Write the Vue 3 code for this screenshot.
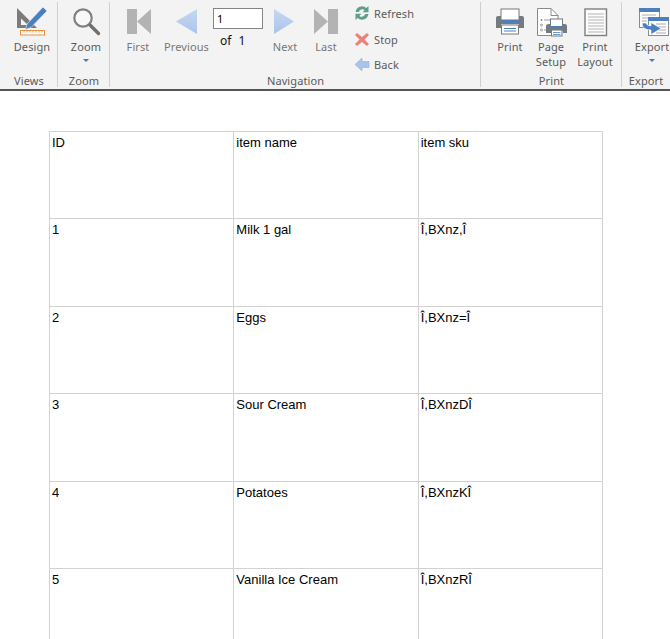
<script setup>
const rows = [
  ['ID', 'item name', 'item sku'],
  ['1', 'Milk 1 gal', 'Î,BXnz,Î'],
  ['2', 'Eggs', 'Î,BXnz=Î'],
  ['3', 'Sour Cream', 'Î,BXnzDÎ'],
  ['4', 'Potatoes', 'Î,BXnzKÎ'],
  ['5', 'Vanilla Ice Cream', 'Î,BXnzRÎ']
]
</script>

<template>
  <div class="page">
    <header class="ribbon">
      <section class="group views">
        <div class="body">
          <button class="btn w50">
            <svg viewBox="7 0 50 39" width="50" height="39">
              <path d="M17 8 L17 28 L37 28 Z M21 18.5 L21 25 L28 25 Z" fill="#7b7b7b" fill-rule="evenodd"/>
              <path d="M43 7 L47 11 L31 27.5 L25.5 29.5 L27 24 Z" fill="#4a80c0" stroke="#f3f3f3" stroke-width=".6"/>
              <rect x="20.5" y="30.5" width="24" height="4.5" fill="#fff" stroke="#e8913a"/>
              <path d="M24 31v1.5M27 31v1.5M30 31v1.5M33 31v1.5M36 31v1.5M39 31v1.5M42 31v1.5" stroke="#e8913a" stroke-width=".8"/>
            </svg>
            <span>Design</span>
          </button>
        </div>
        <div class="glabel">Views</div>
      </section>

      <section class="group zoom">
        <div class="body">
          <button class="btn w42">
            <svg viewBox="65 0 42 39" width="42" height="39">
              <circle cx="83" cy="18" r="8.7" fill="#f8f8f8" stroke="#808080" stroke-width="2.2"/>
              <path d="M90 25 L98.5 33.5" stroke="#707070" stroke-width="3.4" stroke-linecap="round"/>
            </svg>
            <span>Zoom</span>
            <i class="caret"></i>
          </button>
        </div>
        <div class="glabel">Zoom</div>
      </section>

      <section class="group nav">
        <div class="body">
          <button class="btn w44 dim">
            <svg viewBox="116 0 44 39" width="44" height="39">
              <rect x="127" y="9" width="10" height="25" fill="#b3b3b3"/>
              <path d="M151 9 L137 21.5 L151 34 Z" fill="#b3b3b3"/>
            </svg>
            <span>First</span>
          </button>
          <button class="btn w53 dim">
            <svg viewBox="160 0 53 39" width="53" height="39">
              <path d="M197 9 L176 21.5 L197 34 Z" fill="url(#navL)"/>
              <defs>
                <linearGradient id="navL" x1="0" y1="0" x2="0" y2="1">
                  <stop offset="0" stop-color="#c6d8f2"/><stop offset="1" stop-color="#a9c4ea"/>
                </linearGradient>
              </defs>
            </svg>
            <span>Previous</span>
          </button>
          <div class="pager">
            <input class="pageinput" value="1" />
            <div class="of"><span>of</span><span>1</span></div>
          </div>
          <button class="btn w44 dim">
            <svg viewBox="263 0 44 39" width="44" height="39">
              <path d="M274 9 L294 21.5 L274 34 Z" fill="url(#navL)"/>
            </svg>
            <span>Next</span>
          </button>
          <button class="btn w38 dim">
            <svg viewBox="307 0 38 39" width="38" height="39">
              <path d="M314 9 L328 21.5 L314 34 Z" fill="#b3b3b3"/>
              <rect x="328" y="9" width="10" height="25" fill="#b3b3b3"/>
            </svg>
            <span>Last</span>
          </button>
          <div class="smalls">
            <div class="small refresh">
              <svg viewBox="0 0 16 16" width="16" height="16">
                <path d="M1.6 7 A6.5 6.5 0 0 1 12.4 3 L14.5 1 V7.2 H8.6 L10.6 5.1 A3.6 3.6 0 0 0 4.8 7 Z" fill="#5f9f88"/>
                <path d="M14.4 9 A6.5 6.5 0 0 1 3.6 13 L1.5 15 V8.8 H7.4 L5.4 10.9 A3.6 3.6 0 0 0 11.2 9 Z" fill="#5f9f88"/>
              </svg>
              <span>Refresh</span>
            </div>
            <div class="small stop">
              <svg viewBox="0 0 16 16" width="16" height="16">
                <path d="M3 2 L8 6 L13 2 L15 4 L10.5 8.5 L15 13 L13 15 L8 11 L3 15 L1 13 L5.5 8.5 L1 4 Z" fill="#ea8478"/>
              </svg>
              <span>Stop</span>
            </div>
            <div class="small back">
              <svg viewBox="0 0 16 16" width="16" height="16">
                <path d="M8 2 L1 8.5 L8 15 V11.5 H15 V5.5 H8 Z" fill="#a9c4ea" stroke="#8fb0de" stroke-width=".6"/>
              </svg>
              <span>Back</span>
            </div>
          </div>
        </div>
        <div class="glabel">Navigation</div>
      </section>

      <section class="group print">
        <div class="body">
          <button class="btn w40">
            <svg viewBox="490 0 40 39" width="40" height="39">
              <rect x="501" y="9" width="18" height="11" fill="#fff" stroke="#7b7b7b"/>
              <path d="M498 16 H501 V21 H519 V16 H522 Q524 16 524 18 V28 H519 V24 H501 V28 H496 V18 Q496 16 498 16 Z" fill="#747b80"/>
              <rect x="501" y="20" width="18" height="2.5" fill="#4a80c0"/>
              <rect x="501.5" y="25" width="17" height="9" fill="#fff" stroke="#7b7b7b"/>
              <path d="M504 28.5h12M504 31h12" stroke="#4a80c0"/>
            </svg>
            <span>Print</span>
          </button>
          <button class="btn w42">
            <svg viewBox="530 0 42 39" width="42" height="39">
              <path d="M537.5 8.5 H551 L558 15.5 V35.5 H537.5 Z" fill="#fff" stroke="#8a8a8a"/>
              <path d="M551 8.5 V15.5 H558" fill="none" stroke="#8a8a8a"/>
              <circle cx="541.5" cy="20" r="1" fill="#888"/>
              <circle cx="541.5" cy="25" r="1" fill="none" stroke="#888" stroke-width=".8"/>
              <circle cx="541.5" cy="30" r="1" fill="none" stroke="#888" stroke-width=".8"/>
              <path d="M544 20h6M544 30h2" stroke="#999"/>
              <rect x="550.5" y="19" width="12" height="8" fill="#fff" stroke="#747b80"/>
              <path d="M549 24 H550.5 V27.5 H562.5 V24 H565 Q567 24 567 26 V33 H563 V31 H551 V33 H546 V26 Q546 24 549 24 Z" fill="#747b80"/>
              <rect x="550.5" y="26" width="12" height="2" fill="#4a80c0"/>
              <rect x="551.5" y="30" width="10.5" height="6" fill="#fff" stroke="#747b80"/>
              <path d="M553 32.5h7.5M553 34.5h7.5" stroke="#4a80c0" stroke-width=".8"/>
            </svg>
            <span>Page<br />Setup</span>
          </button>
          <button class="btn w46">
            <svg viewBox="572 0 46 39" width="46" height="39">
              <rect x="585" y="9" width="21.5" height="26.5" fill="#fcfcfc" stroke="#7f7f7f" stroke-width="1.4"/>
              <path d="M588 14h16M588 17h16M588 20h16M588 23h16M588 26h16M588 29h16M588 32h16" stroke="#b5b5b5"/>
            </svg>
            <span>Print<br />Layout</span>
          </button>
        </div>
        <div class="glabel">Print</div>
      </section>

      <section class="group export">
        <div class="body">
          <button class="btn w46">
            <svg viewBox="629 0 46 39" width="46" height="39">
              <rect x="639.5" y="8.5" width="20" height="19" fill="#fff" stroke="#8a8a8a"/>
              <rect x="639" y="8" width="21" height="4" fill="#4a80c0"/>
              <path d="M642 15h14M642 18h14M642 21h5" stroke="#aaa"/>
              <rect x="648.5" y="17.5" width="20" height="18" fill="#fff" stroke="#8a8a8a"/>
              <rect x="648" y="17" width="21" height="4" fill="#4a80c0"/>
              <path d="M656 24h10M657 27h9M657 30h9M656 33h10" stroke="#aaa"/>
              <path d="M642 23 Q642 30 651 30 V34.5 L661 28.5 L651 22.5 V26 Q647 26 646 23 Z" fill="#4a80c0" stroke="#fff" stroke-width=".6"/>
            </svg>
            <span>Export</span>
            <i class="caret"></i>
          </button>
        </div>
        <div class="glabel">Export</div>
      </section>
    </header>

    <main class="content">
      <table class="grid">
        <tbody>
          <tr v-for="(row, r) in rows" :key="r">
            <td v-for="(cell, c) in row" :key="c">{{ cell }}</td>
          </tr>
        </tbody>
      </table>
    </main>
  </div>
</template>

<style>
html, body { margin: 0; background: #fff; overflow: hidden; }
</style>

<style scoped>
.page { width: 670px; height: 639px; overflow: hidden; background: #fff; }
.ribbon {
  display: flex; height: 89px; background: #f3f3f3;
  border-bottom: 2px solid #555; overflow: hidden;
  font: 11px/15px "Noto Sans", sans-serif; letter-spacing: .1px; color: #5a5a5a;
}
.group { position: relative; display: flex; flex-direction: column; flex: none; box-sizing: border-box; }
.group::after {
  content: ""; position: absolute; right: 0; top: 2px; bottom: 2px; width: 1px; background: #cfcfcf;
}
.views { width: 58px; padding-left: 7px; }
.zoom { width: 52px; padding-left: 7px; }
.nav { width: 371px; padding-left: 6px; }
.print { width: 141px; padding-left: 9px; }
.export { width: 48px; padding-left: 7px; }
.export::after { display: none; }
.body { display: flex; height: 74px; }
.glabel { text-align: center; line-height: 14px; color: #5a5a5a; margin-left: -7px; }
.nav .glabel { margin-left: -6px; }
.print .glabel { margin-left: -9px; }
.btn {
  display: flex; flex-direction: column; align-items: center; flex: none;
  padding: 0; border: 0; background: none; font: inherit; letter-spacing: inherit; color: inherit;
}
.btn svg { display: block; flex: none; }
.btn span { text-align: center; }
.dim { color: #777; }
.w38 { width: 38px; } .w40 { width: 40px; } .w42 { width: 42px; }
.w44 { width: 44px; } .w46 { width: 46px; } .w50 { width: 50px; } .w53 { width: 53px; }
.caret {
  display: block; width: 0; height: 0; margin-top: 5px;
  border-left: 3px solid transparent; border-right: 3px solid transparent; border-top: 3px solid #4a76b0;
}
.pager { width: 50px; flex: none; padding-top: 8px; box-sizing: border-box; }
.pageinput {
  display: block; width: 50px; height: 21px; box-sizing: border-box; padding: 0 3px; margin: 0;
  border: 1px solid #858585; background: #fff; color: #000; outline: none;
  font: 11px "Noto Sans", sans-serif;
}
.of { display: flex; gap: 7px; margin: 4px 0 0 7px; color: #111; font: 12px/15px "Noto Sans", sans-serif; }
.smalls { display: flex; flex-direction: column; margin-left: 9px; padding-top: 5px; }
.small { display: flex; align-items: center; gap: 4px; height: 16px; }
.small svg { flex: none; }
.stop { margin-top: 10px; }
.back { margin-top: 9px; }
.content { padding: 39.6px 0 0 49px; }
.grid {
  border-collapse: collapse; table-layout: fixed; width: 554px;
  font: 13px/15px "Liberation Sans", Arial, sans-serif; color: #000;
}
.grid td {
  width: 33.33%; height: 87.5px; box-sizing: border-box; padding: 3px 2px 0;
  vertical-align: top; border: 1px solid #d2d2d2;
}
</style>
